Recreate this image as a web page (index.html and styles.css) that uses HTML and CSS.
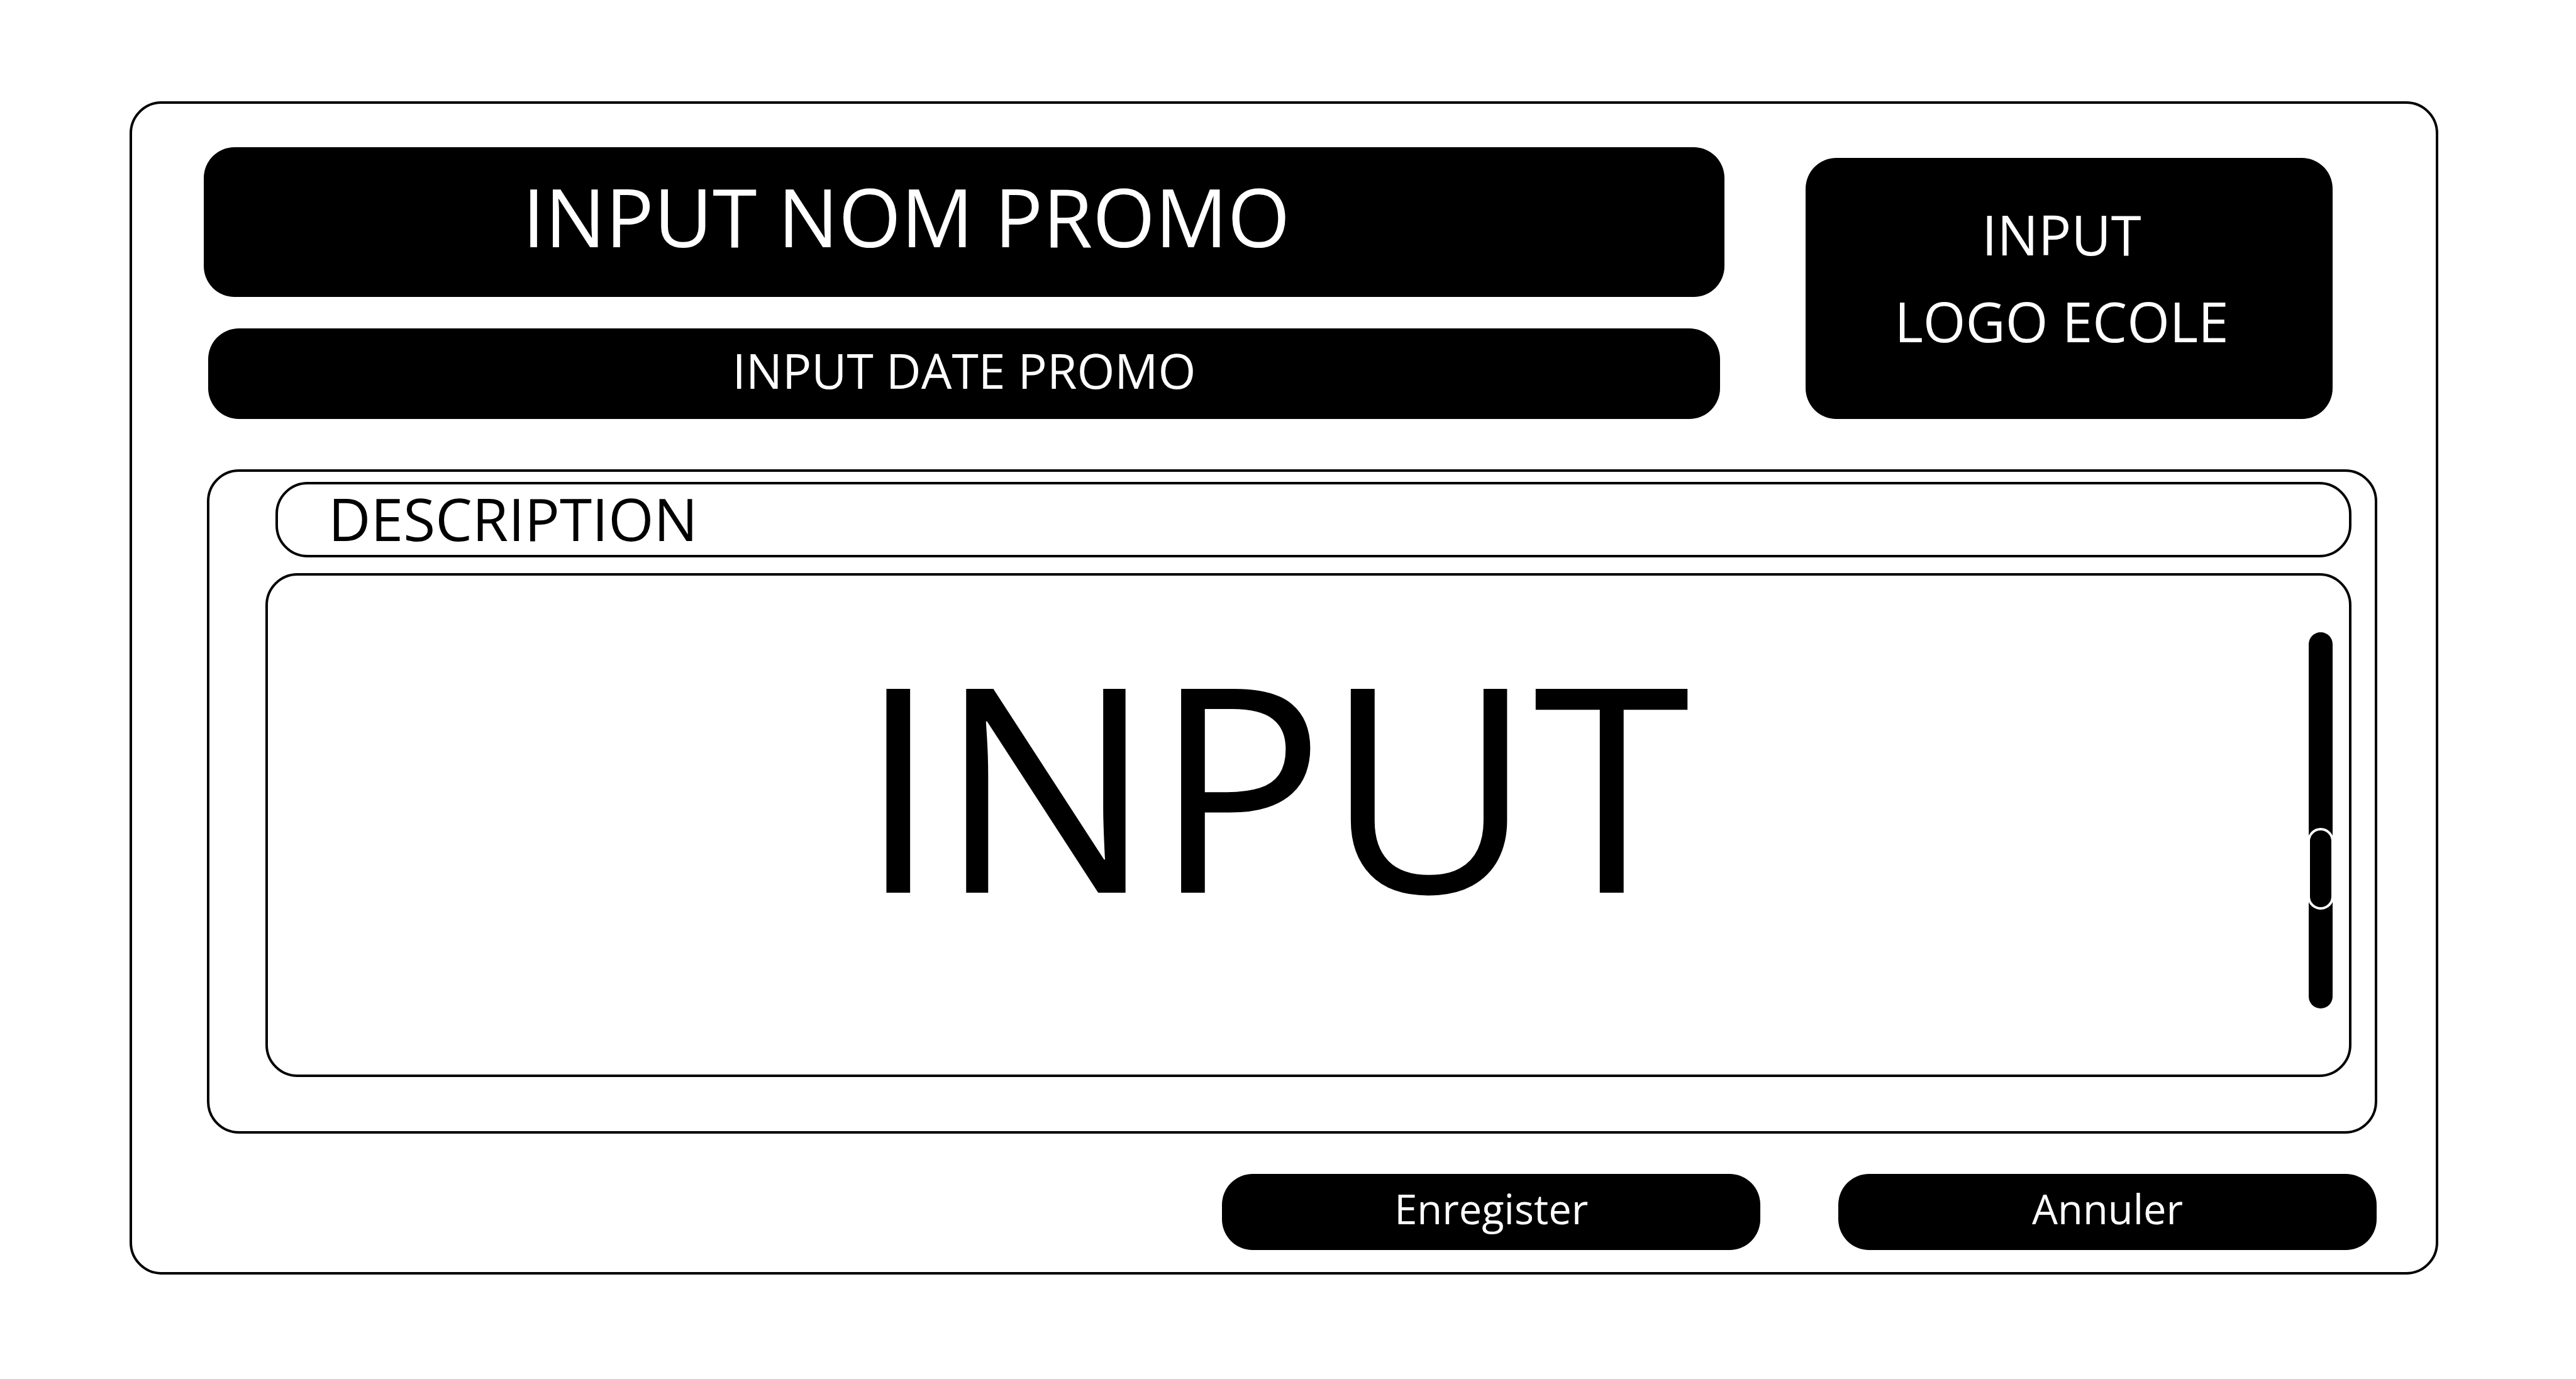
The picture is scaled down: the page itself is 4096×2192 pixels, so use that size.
FILE: index.html
```html
<!DOCTYPE html>
<html lang="fr">
<head>
  <meta charset="utf-8">
  <title>Promo</title>
  <link rel="stylesheet" href="styles.css">
</head>
<body>
  <form class="promo">
    <div class="promo-head">
      <div class="promo-fields">
        <input class="field field-name" type="text" aria-label="Nom promo" value="INPUT NOM PROMO">
        <input class="field field-date" type="text" aria-label="Date promo" value="INPUT DATE PROMO">
      </div>
      <button class="logo-picker" type="button">INPUT<br>LOGO ECOLE</button>
    </div>

    <section class="panel">
      <label class="panel-title" for="description">DESCRIPTION</label>
      <div class="panel-box">
        <textarea class="panel-text" id="description" rows="1">INPUT</textarea>
        <div class="scroll-track"><div class="scroll-thumb"></div></div>
      </div>
    </section>

    <div class="actions">
      <button class="action" type="submit">Enregister</button>
      <button class="action" type="button">Annuler</button>
    </div>
  </form>
</body>
</html>
```

FILE: styles.css
```css
* {
  box-sizing: border-box;
}

body {
  margin: 0;
  background: #fff;
  color: #000;
  font-family: "Open Sans", "Noto Sans", sans-serif;
}

input,
textarea,
button {
  margin: 0;
  border: 0;
  font-family: inherit;
}

.promo {
  margin: 161px 219px 0 206px;
  padding: 69px 93px 35px 114px;
  border: 4px solid #000;
  border-radius: 51px;
}

/* Name, date and school logo */
.promo-head {
  display: grid;
  grid-template-columns: 2418fr 838fr;
  gap: 129px;
  padding-right: 71px;
}

.promo-fields {
  display: flex;
  flex-direction: column;
  gap: 50px;
}

.field {
  border-radius: 49px;
  background: #000;
  color: #fff;
  text-align: center;
}

.field-name {
  height: 238px;
  padding: 0 184px 20px 0;
  font-size: 128px;
}

.field-date {
  height: 144px;
  margin: 0 7px;
  padding: 0 0 12px;
  font-size: 77px;
}

.logo-picker {
  margin-top: 17px;
  padding: 0 24px 36px 0;
  border-radius: 49px;
  background: #000;
  color: #fff;
  font-size: 87px;
  line-height: 138px;
}

/* Description */
.panel {
  display: flex;
  flex-direction: column;
  gap: 25px;
  margin: 80px 0 0 5px;
  padding: 16px 37px 86px 89px;
  border: 4px solid #000;
  border-radius: 51px;
}

.panel-title {
  margin-left: 16px;
  padding: 0 80px 4px;
  border: 4px solid #000;
  border-radius: 51px;
  font-size: 93px;
  line-height: 108px;
}

.panel-box {
  display: flex;
  padding-right: 26px;
  border: 4px solid #000;
  border-radius: 51px;
}

.panel-text {
  flex: 1;
  height: 793px;
  padding: 98px 44px 0 0;
  background: transparent;
  color: #000;
  font-size: 454px;
  line-height: 460px;
  text-align: center;
  resize: none;
  overflow: hidden;
}

.scroll-track {
  position: relative;
  width: 38px;
  margin: 90px 0 105px;
  border-radius: 19px;
  background: #000;
}

.scroll-thumb {
  position: absolute;
  top: 52%;
  left: -2px;
  width: 42px;
  height: 130px;
  border: 4px solid #fff;
  border-radius: 21px;
}

/* Buttons */
.actions {
  display: grid;
  grid-template-columns: 1fr 1fr;
  gap: 124px;
  width: calc(53% + 4px);
  margin: 64px 1px 0 auto;
}

.action {
  height: 121px;
  padding: 0 0 12px;
  border-radius: 49px;
  background: #000;
  color: #fff;
  font-size: 65px;
}
```
